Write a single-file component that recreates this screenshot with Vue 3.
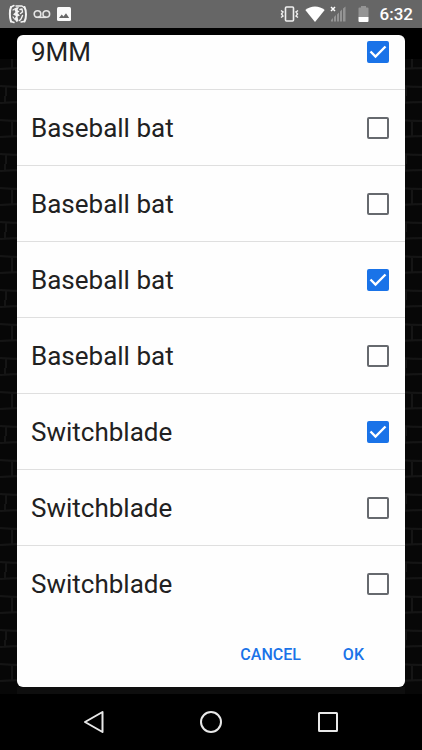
<script setup>
import { ref } from 'vue'

const weapons = ref([
  { id: 'w1', name: '9MM', checked: true },
  { id: 'w2', name: 'Baseball bat', checked: false },
  { id: 'w3', name: 'Baseball bat', checked: false },
  { id: 'w4', name: 'Baseball bat', checked: true },
  { id: 'w5', name: 'Baseball bat', checked: false },
  { id: 'w6', name: 'Switchblade', checked: true },
  { id: 'w7', name: 'Switchblade', checked: false },
  { id: 'w8', name: 'Switchblade', checked: false },
])
</script>

<template>
  <div class="screen">
    <header class="status">
      <div class="group notices">
        <svg width="20" height="20" viewBox="0 0 20 20" aria-hidden="true">
          <g fill="none" stroke="#f4f4f4" stroke-linecap="round" stroke-linejoin="round">
            <path d="M3 3C1.500 6 1.500 14 3 17.500" stroke-width="2" />
            <path d="M16.500 3C18.500 7 18.500 14 16.500 17.500" stroke-width="2" />
            <path d="M3 3L6 1.500M8 2L14 2L16 3.500M3 17.500L6 18.500M13 18L16 17.500" stroke-width="1.400" />
            <path d="M5 6L7.500 4.500M5 13L6.500 15" stroke-width="1.200" />
            <path d="M12 5.500L14 5L14.500 8L12.500 9.500M14.500 11.500L13 15L11.500 16.500" stroke-width="1.400" />
          </g>
          <path d="M8 3.500L11 3L9.500 6L11.500 7.500L9.500 9L12 11.500L9.500 12.500L10.500 17L8.500 18L6.500 15L8 12L5 10.500L7.500 8L6.500 6Z" fill="#f4f4f4" />
        </svg>
        <svg width="18" height="10" viewBox="0 0 18 10" aria-hidden="true">
          <g fill="none" stroke="#e6e6e6" stroke-width="1.600">
            <circle cx="4.500" cy="5" r="3.300" />
            <circle cx="13.300" cy="5" r="3.300" />
            <path d="M4.500 8.300H13.300" />
          </g>
        </svg>
        <svg width="14" height="14" viewBox="0 0 14 14" aria-hidden="true">
          <rect width="14" height="14" rx="1.500" fill="#fafafa" />
          <path d="M2 11L4.700 7.500L6.500 9.600L9 6.300L12.200 11Z" fill="#666" />
        </svg>
      </div>
      <div class="group system">
        <svg width="19" height="16" viewBox="0 0 19 16" aria-hidden="true">
          <g fill="none" stroke="#f0f0f0">
            <rect x="5.500" y="1" width="8" height="14" rx="1" stroke-width="1.600" />
            <path d="M1 4.500L3 6L1.500 8L3 10L1 11.500M18 4.500L16 6L17.500 8L16 10L18 11.500" stroke-width="1.400" />
          </g>
        </svg>
        <svg class="wifi" width="20" height="16" viewBox="0 0 20 16" aria-hidden="true">
          <path d="M10 16L0.300 4C5.500 -0.700 14.500 -0.700 19.700 4Z" fill="#fff" />
        </svg>
        <svg class="signal" width="16" height="16" viewBox="0 0 16 16" aria-hidden="true">
          <path d="M1 1L5 5M5 1L1 5" stroke="#fff" stroke-width="1.500" />
          <path d="M1 15.500V14L3 12V15.500ZM4 15.500V11L6 9V15.500ZM7 15.500V8.500L9 6.500V15.500ZM10 15.500V5.500L12 3.500V15.500ZM13 15.500V2.500L15.500 0.500V15.500Z" fill="#949494" />
        </svg>
        <svg class="battery" width="11" height="16" viewBox="0 0 11 16" aria-hidden="true">
          <path d="M0.500 2.500Q0.500 1.500 1.500 1.500H3V0H8V1.500H9.500Q10.500 1.500 10.500 2.500V11H0.500Z" fill="#949494" />
          <path d="M0.500 11H10.500V15Q10.500 16 9.500 16H1.500Q0.500 16 0.500 15Z" fill="#fff" />
        </svg>
        <time>6:32</time>
      </div>
    </header>

    <main class="backdrop">
      <form class="dialog" role="dialog" @submit.prevent>
        <ul class="list">
          <li v-for="w in weapons" :key="w.id" class="row">
            <label :for="w.id">{{ w.name }}</label>
            <input :id="w.id" v-model="w.checked" type="checkbox" />
          </li>
        </ul>
        <div class="actions">
          <button type="button">CANCEL</button>
          <button type="submit">OK</button>
        </div>
      </form>
    </main>

    <nav class="nav">
      <button type="button" aria-label="Back">
        <svg width="24" height="24" viewBox="0 0 24 24">
          <path d="M20.500 2L3 12L20.500 22Z" />
        </svg>
      </button>
      <button type="button" aria-label="Home">
        <svg width="24" height="24" viewBox="0 0 24 24"><circle cx="12" cy="12" r="10" /></svg>
      </button>
      <button type="button" aria-label="Recent apps">
        <svg width="24" height="24" viewBox="0 0 24 24">
          <rect x="3" y="3" width="18" height="18" rx="0.500" />
        </svg>
      </button>
    </nav>
  </div>
</template>

<style>
body {
  margin: 0;
  background: #000;
}
</style>

<style scoped>
.screen {
  display: flex;
  flex-direction: column;
  height: 100vh;
  font-family: Roboto, "Liberation Sans", sans-serif;
  background: #000;
}

.status {
  display: flex;
  flex: none;
  align-items: center;
  justify-content: space-between;
  height: 28px;
  padding: 0 9px 0 8px;
  background: #666;
}

.group {
  display: flex;
  align-items: center;
}

.notices {
  gap: 5px;
}

.notices svg:last-child {
  margin-left: 1px;
}

.wifi {
  margin-left: 6px;
}

.signal {
  margin-left: 5px;
}

.battery {
  margin-left: 12px;
}

time {
  margin-left: 11px;
  color: #fff;
  font-size: 17px;
  font-weight: 500;
  line-height: 28px;
}

/* Dark brick wall: mortar courses every 17px, joints staggered between courses */
.backdrop {
  display: flex;
  flex: 1;
  min-height: 0;
  padding: 7px 17px;
  background:
    linear-gradient(#000, #000) 0 0 / 100% 31px no-repeat,
    linear-gradient(#0e0e0e, #0e0e0e) 50% 100% / calc(100% - 34px) 7px no-repeat,
    url("data:image/svg+xml,%3Csvg xmlns='http://www.w3.org/2000/svg' width='50' height='68'%3E%3Cpath d='M0 7Q25 5 50 7M0 24Q20 26 50 24M0 41Q30 39 50 41M0 58Q25 60 50 58M5 0V7M12 24V41M6 58V68' fill='none' stroke='%23151515' stroke-width='2'/%3E%3C/svg%3E") 0 0 / 50px 68px,
    #070707;
}

.dialog {
  display: flex;
  flex: 1;
  flex-direction: column;
  min-width: 0;
  overflow: hidden;
  border-radius: 6px;
  background: #fefefe;
}

.list {
  display: flex;
  flex: 1;
  flex-direction: column;
  justify-content: flex-end;
  min-height: 0;
  margin: 0;
  padding: 0;
  overflow: hidden;
  list-style: none;
}

.row {
  display: flex;
  flex: none;
  align-items: center;
  justify-content: space-between;
  box-sizing: border-box;
  height: 76px;
  padding: 0 16px 0 14px;
  border-bottom: 1px solid #dfdfdf;
}

.row:last-child {
  border-bottom-color: transparent;
}

.row label {
  flex: 1;
  color: #212121;
  font-size: 26px;
  line-height: 32px;
}

.row input {
  appearance: none;
  box-sizing: border-box;
  width: 22px;
  height: 22px;
  margin: 0;
  border: 2px solid #66696e;
  border-radius: 2px;
}

.row input:checked {
  border-color: #1a73e8;
  background: #1a73e8 url("data:image/svg+xml,%3Csvg xmlns='http://www.w3.org/2000/svg' viewBox='0 0 18 18'%3E%3Cpath d='M1.500 8.500L6.500 13.500L16.500 3.500' fill='none' stroke='white' stroke-width='2.400'/%3E%3C/svg%3E") center / 18px 18px no-repeat;
}

.actions {
  display: flex;
  flex: none;
  align-items: center;
  justify-content: flex-end;
  gap: 10px;
  height: 65px;
  padding: 0 25px;
}

.actions button {
  padding: 8px 16px;
  border: 0;
  background: none;
  color: #1a73e8;
  font-family: inherit;
  font-size: 16px;
  font-weight: 500;
  line-height: 20px;
}

.nav {
  display: flex;
  flex: none;
  align-items: center;
  justify-content: space-between;
  height: 56px;
  padding: 0 82px;
}

.nav button {
  display: flex;
  padding: 0;
  border: 0;
  background: none;
}

.nav svg {
  fill: none;
  stroke: #e8e8e8;
  stroke-width: 2;
  stroke-linejoin: round;
}
</style>
